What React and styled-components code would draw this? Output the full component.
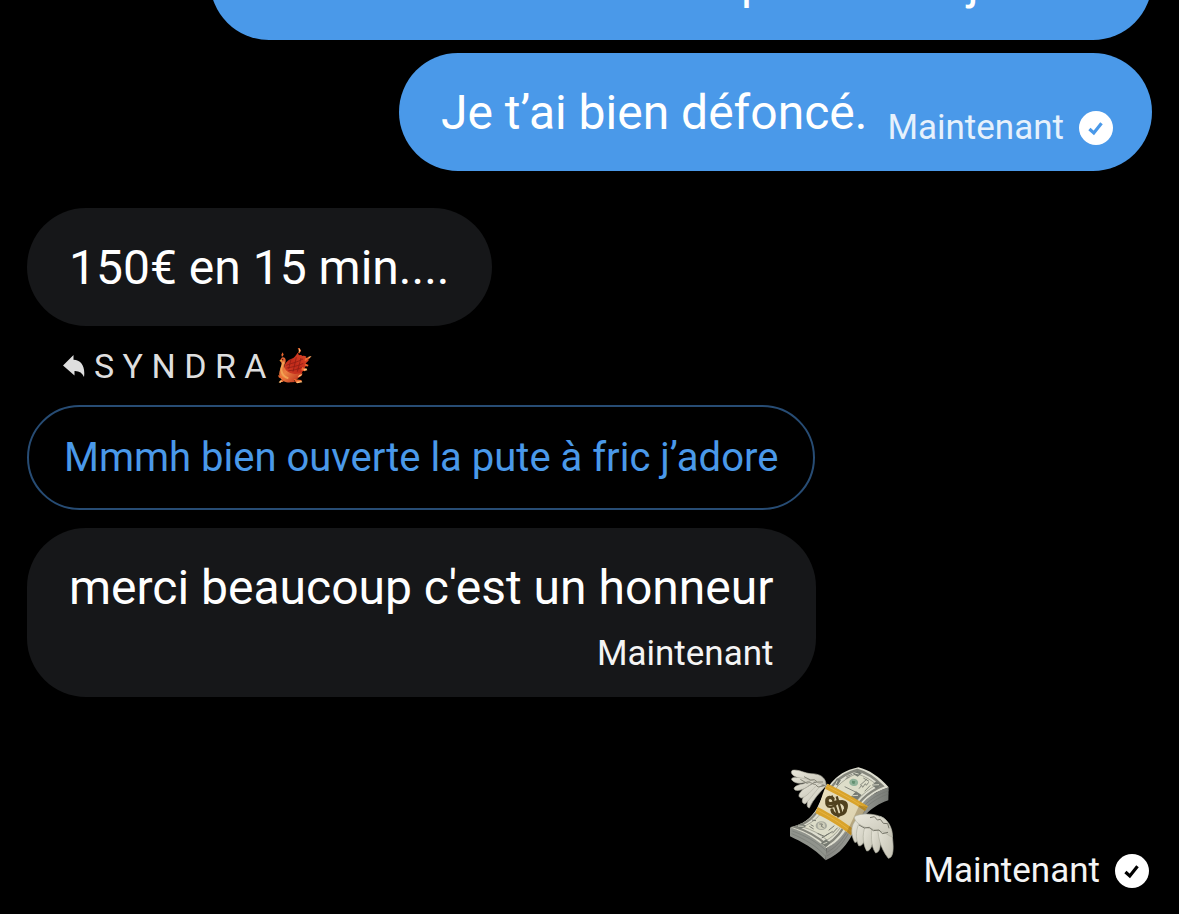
import React from 'react'
import styled, { createGlobalStyle } from 'styled-components'

const App = () => {
    return (
        <>
            <GlobalStyle />
            <Thread>
                <Bubble $mine>
                    <Message>Mmmh bien ouverte la pute à fric j’adore</Message>
                </Bubble>
                <Bubble $mine $inline>
                    <Message>Je t’ai bien défoncé.</Message>
                    <Meta $tone="#e6f1fc">
                        <time>Maintenant</time>
                        <SentIcon tick="#4a99e9" />
                    </Meta>
                </Bubble>
                <Group>
                    <Bubble>
                        <Message>150€ en 15 min....</Message>
                    </Bubble>
                    <ReplyTo>
                        <ReplyIcon />
                        <span>S Y N D R A</span>
                        <Phoenix />
                    </ReplyTo>
                    <Quote>Mmmh bien ouverte la pute à fric j’adore</Quote>
                    <Bubble>
                        <Message>merci beaucoup c'est un honneur</Message>
                        <Meta>
                            <time>Maintenant</time>
                        </Meta>
                    </Bubble>
                </Group>
                <EmojiMessage>
                    <FlyingMoney />
                    <Meta>
                        <time>Maintenant</time>
                        <SentIcon tick="#000" />
                    </Meta>
                </EmojiMessage>
            </Thread>
        </>
    )
}

//Icons
const SentIcon = ({ tick }) => (
    <svg width="34" height="34" viewBox="0 0 34 34" role="img" aria-label="Envoyé">
        <circle cx="17" cy="17" r="17" fill="#fff" />
        <path d="M10.400 18l4.400 4 7.700-9.800" fill="none" stroke={tick} strokeWidth="3.2" />
    </svg>
)

const ReplyIcon = () => (
    <svg width="22" height="22" viewBox="0 0 22 22" aria-hidden="true">
        <path d="M10.500 0v4.800C18 5.200 22.500 11 21 22c-1.700-4.200-4.800-6.200-9.500-6v4.500L0 10.400z" fill="#dedede" />
    </svg>
)

const Phoenix = () => (
    <Bird viewBox="18 20 114 114" role="img" aria-label="Phénix">
        <defs>
            <linearGradient id="wing" x1="0" y1="1" x2="1" y2="0">
                <stop offset="0" stopColor="#d8482a" />
                <stop offset=".5" stopColor="#c02a1a" />
                <stop offset="1" stopColor="#e04a28" />
            </linearGradient>
            <linearGradient id="breast" x1="0" y1="0" x2="1" y2="1">
                <stop offset="0" stopColor="#d9582f" />
                <stop offset=".45" stopColor="#ec8041" />
                <stop offset="1" stopColor="#b62417" />
            </linearGradient>
        </defs>
        <path d="M46 94c-2-20 4-32 20-38 11-4 14-10 20-19l4 8c4-2 8-2 10 2 5-1 9 0 12 2-2 4-4 6-4 8l12 1c-3 6-8 8-10 12 2 4 1 8-2 11-2 6-2 10-8 13-1 9-7 16-13 20-10 7-24 9-32 4-6-5-8-13-9-24z" fill="url(#wing)" />
        <path d="M32 61l6-9c7-3 13 2 12 10-1 9-6 13-3 21 4 10 13 15 25 17 11 2 18 0 26-4-4 13-13 22-24 25l6 4-13 1c-14 2-29-3-35-17-4-11 1-21 5-30 2-6 2-13-5-18z" fill="url(#breast)" />
        <path d="M52 75c17-7 32-9 50-19M53 83c17-3 34-6 50-14M58 91c14 0 29-5 42-10M66 56l-7 30M82 51l-10 43M96 53l-11 41" fill="none" stroke="#861a12" strokeWidth="2" />
        <path d="M43 64c1 9-8 15-6 26 2 12 9 20 21 24" fill="none" stroke="#f2a152" strokeWidth="6" />
        <path d="M86 24l6-1 4 9-6 8-3-5 4-3zM37 43l4-7 3 7-5 7zM108 54l19-6-7 8-13 7zM110 70l9 4-4 5-8-4zM99 80l14 7-6 6-10-3zM92 103l9-4-4 8-12 4zM74 116l22 3 4 4-18 5zM32 125l8-10 8-3-7 9 3 4zM30 112l-3-7 8 1 8 7z" fill="#ed682f" />
        <path d="M103 87l9-3 3 6-8 1zM82 124l15-2 3 4-16 3zM29 126l7-7 3 4-5 5zM91 104l9-2-6 6-8 2zM118 49l10-1-8 6zM91 25l4 5-4 5-2-5z" fill="#ffc078" />
        <circle cx="41" cy="58" r="2" fill="#33130b" />
        <path d="M31 61l8-3-1 6z" fill="#e8b344" />
    </Bird>
)

const FlyingMoney = () => (
    <Money viewBox="60 48 318 288" role="img" aria-label="Argent avec des ailes">
        <defs>
            <linearGradient id="edge" x1="0" y1="0" x2="1" y2="0">
                <stop offset="0" stopColor="#858681" />
                <stop offset=".5" stopColor="#999b95" />
                <stop offset="1" stopColor="#777a75" />
            </linearGradient>
            <linearGradient id="feather" x1="0" y1="0" x2="1" y2="1">
                <stop offset="0" stopColor="#eae8dc" />
                <stop offset="1" stopColor="#c4c2b4" />
            </linearGradient>
            <linearGradient id="band" x1="0" y1="0" x2="1" y2="1">
                <stop offset="0" stopColor="#e9dfbd" />
                <stop offset=".7" stopColor="#dfd5b3" />
                <stop offset="1" stopColor="#b7a66f" />
            </linearGradient>
        </defs>
        {/* bundle sides */}
        <path d="M63 233v26c35 17 69 33 107 72l2-36C139 262 101 239 63 233z" fill="#90938c" />
        <path d="M172 295l-2 36c47-22 64-49 83-83 23-43 47-76 105-97l1-39c-62 22-87 50-113 99-20 37-38 63-74 84z" fill="url(#edge)" />
        <path d="M70 243c38 14 72 31 103 61M68 251c39 17 72 34 102 68" fill="none" stroke="#777b75" strokeWidth="2" />
        <path d="M174 307c35-20 52-45 72-83 26-49 54-82 113-102M173 318c37-19 56-49 76-87 26-49 55-80 109-99" fill="none" stroke="#737670" strokeWidth="2" />
        {/* top bill */}
        <path d="M63 233c38-9 62-26 81-58 27-55 46-107 124-123 33 8 61 27 91 60-56 17-87 50-112 99-20 40-39 66-75 84-34-31-65-50-109-62z" fill="#deded0" />
        <path d="M77 231c38-12 60-29 77-62 26-53 47-92 111-109 27 7 51 23 76 48-50 20-80 53-103 99-20 37-35 59-65 77-30-25-58-42-96-53z" fill="none" stroke="#85867c" strokeWidth="7" />
        <path d="M101 231c33-15 51-31 65-58 27-57 49-82 97-102 25 8 42 18 60 33-47 27-70 56-91 98-18 35-34 54-58 68-21-18-45-31-73-39z" fill="#ddddc9" stroke="#a5a697" strokeWidth="3" />
        <path d="M195 100l9-15 12 5-10 17zM251 71l14-9 14 7-13 11zM309 105l13-11 16 10-16 12zM243 143l18-19 17 11-15 17zM82 228l15-8 15 8-18 10zM155 280l16-12 13 10-13 14z" fill="#777b72" />
        <path d="M205 92l-5 11M257 69l12 3M312 105l18-1M87 228l17 1M163 281l12-4M250 137l17-1" stroke="#d5d5c5" strokeWidth="3" />
        <path d="M244 90c7-7 21-3 23 5 2 10-8 15-17 12-9-3-12-10-6-17z" fill="#91b39a" />
        <path d="M249 92l10 2-3 9-7-3z" fill="#638f70" />
        <path d="M232 80l18-7M230 86l12-6M273 106l22-20M270 116l8-10 3 6 8-11 3 5 7-9M227 110l35 17M283 84l17 10M287 124l17-18" fill="none" stroke="#85877c" strokeWidth="3" />
        <ellipse cx="157" cy="227" rx="17" ry="13" fill="#a8aa9e" />
        <ellipse cx="157" cy="227" rx="11" ry="10" fill="#cfcfba" />
        <path d="M151 222h9l-3 7 7 4M121 229l13 8M125 224l9 5M146 250l20 9 13-8M158 264l33-20M179 241l17-14M190 250l16-17M129 210l12 2" fill="none" stroke="#777970" strokeWidth="3" />
        {/* paper band */}
        <path d="M174 101c40 23 78 45 121 68-18 27-32 55-49 87-34-28-69-48-106-68 14-26 19-58 34-87z" fill="url(#band)" />
        <path d="M176 101c43 21 81 43 121 68l-9 14c-39-27-78-46-120-67zM146 171c40 21 73 39 108 67l-8 18c-34-29-70-48-107-67z" fill="#d9a32b" />
        <path d="M174 108c42 22 79 42 118 68M145 180c37 20 68 37 102 65" fill="none" stroke="#e6b440" strokeWidth="3" />
        <path d="M271 166l24 5-49 85-13-9z" fill="#614713" opacity=".3" />
        <path d="M192 146c-17-12-25 9-12 14 13 4 19-8 34-4 23 7 20 34-1 38-12 2-23-4-24-14" fill="none" stroke="#50411e" strokeWidth="10" strokeLinecap="round" />
        <path d="M177 147c-10 13-3 27 12 23 14-4 17-19 33-16 17 4 13 24 1 29M188 137l21 65M203 139l15 51" fill="none" stroke="#50411e" strokeWidth="7" />
        {/* left wing */}
        <g fill="url(#feather)" stroke="#b2b1a3" strokeWidth="2">
            <path d="M170 108c-17 19-38 40-49 66-10-1-8-20 2-38l21-31z" />
            <path d="M162 101c-23 20-34 43-54 61-16-4-7-23 12-40l25-22z" />
            <path d="M157 97c-24 13-37 41-59 47-16-2-6-20 11-30l27-16z" />
            <path d="M146 91c-23 10-41 34-66 30-13-7 4-17 22-19l27-11z" />
            <path d="M136 87c-18 7-40 19-60 9-15-9-8-14 7-13l32-5z" />
            <path d="M171 107c1-26-20-36-45-36-20-1-38-14-56-10-9 7 4 21 20 22 31 3 56 15 81 24z" />
        </g>
        <path d="M94 88l20 12c13-7 15 4 25 3l8 8 17-3M105 80l20 10 11-1 9 7 17 0" fill="none" stroke="#858477" strokeWidth="3" />
        {/* right wing */}
        <g fill="url(#feather)" stroke="#aead9f" strokeWidth="2">
            <path d="M263 208c-20 18-17 48-6 69 12 3 15-21 21-42l14-28z" />
            <path d="M276 210c-17 26-17 55-7 77 13 5 20-22 27-45l8-31z" />
            <path d="M294 216c-14 27-16 59-1 87 16 2 20-34 24-60l-2-29z" />
            <path d="M311 222c-5 31-7 65 9 87 17-3 15-34 13-64l-5-27z" />
            <path d="M327 222c-2 33 5 70 31 103 17-2 16-34 12-65-4-29-16-53-36-61z" />
            <path d="M256 200c20-13 64-9 86 3 19 11 30 38 28 58-9-2-18-11-26-14-20-10-47-9-62-18-13-7-25-14-26-29z" />
        </g>
        <path d="M270 225l16 9 15-2 12 10 17-2 10 11 17-4M303 203l13-3 9 10 9-2 9 12 13 1 4 14" fill="none" stroke="#77766a" strokeWidth="3" />
    </Money>
)

//Styled Components
const GlobalStyle = createGlobalStyle`
* {
    box-sizing: border-box;
}

body {
    margin: 0;
    background: #000;
    color: #fff;
    font-family: Roboto, 'Liberation Sans', sans-serif;
}

svg {
    display: block;
    flex-shrink: 0;
}
`

const Thread = styled.main`
    display: flex;
    flex-direction: column;
    justify-content: flex-end;
    align-items: flex-start;
    gap: 13px;
    height: 100vh;
    padding: 0 27px 26px;
    overflow: hidden;
`

const Group = styled.section`
    display: flex;
    flex-direction: column;
    align-items: flex-start;
    margin-top: 24px;
`

const Bubble = styled.div`
    display: flex;
    flex-direction: ${({ $inline }) => ($inline ? 'row' : 'column')};
    align-items: flex-end;
    align-self: ${({ $mine }) => ($mine ? 'flex-end' : 'flex-start')};
    gap: ${({ $inline }) => ($inline ? '20px' : '16px')};
    padding: 28px ${({ $inline }) => ($inline ? '39px' : '43px')} 26px 42px;
    border-radius: 59px;
    background: ${({ $mine }) => ($mine ? '#4a99e9' : '#161719')};
    flex-shrink: 0;
`

const Message = styled.p`
    margin: 0;
    font-size: 48px;
    line-height: 64px;
`

const Meta = styled.div`
    display: flex;
    align-items: center;
    gap: 15px;
    font-size: 35px;
    line-height: 35px;
    color: ${({ $tone }) => $tone || '#f4f4f4'};
`

const ReplyTo = styled.div`
    display: flex;
    align-items: center;
    gap: 9px;
    height: 79px;
    padding-left: 36px;
    font-size: 34px;
    color: #dedede;
`

const Quote = styled.blockquote`
    margin: 0 0 18px;
    padding: 27px 35px;
    border: 2px solid #274c74;
    border-radius: 53px;
    font-size: 40px;
    line-height: 47px;
    color: #4a99e9;
`

const EmojiMessage = styled.div`
    display: flex;
    align-items: flex-end;
    align-self: flex-end;
    gap: 28px;
    margin-top: 56px;
    padding-right: 3px;
`

const Bird = styled.svg`
    width: 38px;
    height: 38px;
`

const Money = styled.svg`
    width: 106px;
    height: 96px;
    margin-bottom: 26px;
`

export default App
